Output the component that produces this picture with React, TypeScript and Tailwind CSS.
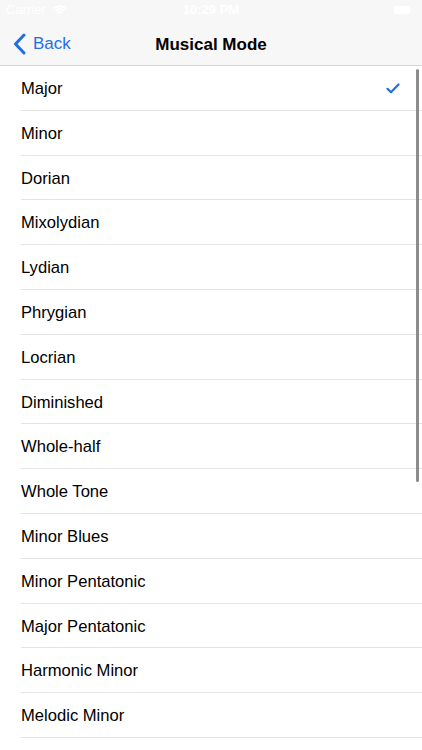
import React from "react";

const modes = [
  "Major",
  "Minor",
  "Dorian",
  "Mixolydian",
  "Lydian",
  "Phrygian",
  "Locrian",
  "Diminished",
  "Whole-half",
  "Whole Tone",
  "Minor Blues",
  "Minor Pentatonic",
  "Major Pentatonic",
  "Harmonic Minor",
  "Melodic Minor",
];

function Wifi() {
  return (
    <svg width="15" height="11" viewBox="0 0 15 11" fill="white">
      <path d="M7.5 2.2c2.2 0 4.2.8 5.7 2.2l1.3-1.3C12.6 1.3 10.2.3 7.5.3S2.4 1.3.5 3.1l1.3 1.3c1.5-1.4 3.5-2.2 5.7-2.2z" />
      <path d="M7.5 5.2c1.4 0 2.6.5 3.6 1.4l1.3-1.3C11.1 4 9.4 3.3 7.5 3.3S3.9 4 2.6 5.3l1.3 1.3c1-.9 2.2-1.4 3.6-1.4z" />
      <path d="M7.5 8.1c.6 0 1.1.2 1.5.6l1.3-1.3c-.8-.7-1.7-1.1-2.8-1.1s-2 .4-2.8 1.1L6 8.7c.4-.4.9-.6 1.5-.6zM7.5 10.7 6.6 9.8c.5-.5 1.3-.5 1.8 0z" />
    </svg>
  );
}

function StatusBar() {
  return (
    <div className="relative flex h-[20px] items-center justify-between px-[6px] text-[13px] text-white">
      <div className="flex items-center gap-[6px]">
        <span>Carrier</span>
        <Wifi />
      </div>
      <span className="absolute left-1/2 -translate-x-1/2 font-semibold">10:29 PM</span>
      <div className="flex items-center pr-[4px]">
        <div className="h-[8px] w-[16px] rounded-[2px] bg-white" />
        <div className="ml-[1px] h-[4px] w-[1.5px] rounded-r bg-white opacity-60" />
      </div>
    </div>
  );
}

function NavBar() {
  return (
    <div className="relative flex h-[46px] items-center border-b border-[#d6d6d6] pt-[2px]">
      <button className="flex items-center gap-[7px] pl-[13px] text-[17px] text-[#1f6fe5]">
        <svg width="13" height="22" viewBox="0 0 13 22" fill="none">
          <path d="M11 2 2.5 11 11 20" stroke="#1f6fe5" strokeWidth="3" strokeLinecap="round" strokeLinejoin="round" />
        </svg>
        <span>Back</span>
      </button>
      <span className="absolute left-1/2 top-[12px] -translate-x-1/2 text-[17px] font-bold text-black">
        Musical Mode
      </span>
    </div>
  );
}

export default function App() {
  return (
    <div
      className="flex h-[750px] w-[422px] flex-col overflow-hidden bg-white"
      style={{ fontFamily: '"Liberation Sans", Arial, sans-serif' }}
    >
      <div className="bg-[#f7f7f7]">
        <StatusBar />
        <NavBar />
      </div>
      <div className="relative flex-1 overflow-hidden">
        {modes.map((m, idx) => (
          <div key={m} className="pl-[21px]">
            <div className="flex h-[44.8px] items-center justify-between border-b border-[#e3e3e3] pr-[22px] pt-[3px]">
              <span className="text-[16.6px] text-black">{m}</span>
              {idx === 0 && (
                <svg width="14" height="11" viewBox="0 0 14 11" fill="none" className="-mt-[2px]">
                  <path d="M1.5 5.8 5 9.2 12.5 1.5" stroke="#1f6fe5" strokeWidth="2.2" strokeLinecap="round" strokeLinejoin="round" />
                </svg>
              )}
            </div>
          </div>
        ))}
        {/* scroll indicator */}
        <div className="absolute right-[3px] top-[3px] h-[413px] w-[3px] rounded-full bg-[#8c8c8c]" />
      </div>
    </div>
  );
}
